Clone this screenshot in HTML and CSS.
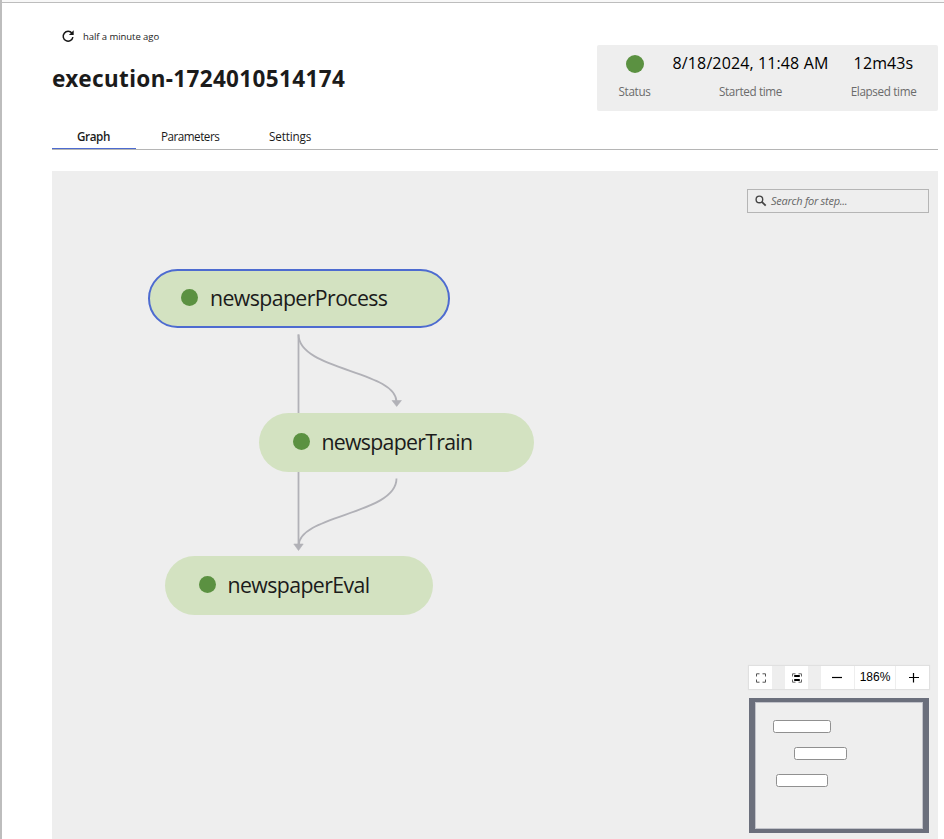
FILE: index.html
```html
<!DOCTYPE html>
<html lang="en">
<head>
<meta charset="utf-8">
<title>execution-1724010514174</title>
<link rel="stylesheet" href="styles.css">
</head>
<body>
<main class="page">
  <header class="header">
    <div class="heading">
      <div class="refresh">
        <svg class="refresh-icon" width="14" height="14" viewBox="0 0 14 14"><path d="M11 4.3A4.9 4.9 0 1 0 11.9 8.2" fill="none" stroke="#171717" stroke-width="1.5"/><path d="M12.7 1.2v4.9H7.9z" fill="#171717"/></svg>
        <span class="refresh-text">half a minute ago</span>
      </div>
      <h1 class="title">execution-1724010514174</h1>
    </div>
    <dl class="summary">
      <div class="stat stat-status"><dd class="value"><span class="status-dot"></span></dd><dt>Status</dt></div>
      <div class="stat stat-started"><dd class="value"><span class="value-text">8/18/2024, 11:48 AM</span></dd><dt>Started time</dt></div>
      <div class="stat stat-elapsed"><dd class="value"><span class="value-text">12m43s</span></dd><dt>Elapsed time</dt></div>
    </dl>
  </header>
  <nav class="tabs">
    <a class="tab tab-active">Graph</a>
    <a class="tab tab-parameters">Parameters</a>
    <a class="tab tab-settings">Settings</a>
  </nav>
  <section class="canvas">
    <svg class="edges" width="886" height="668" viewBox="52 171 886 668">
      <g fill="none" stroke="#b1b1b7" stroke-width="1.8">
        <path d="M298.5 334.5V545"/>
        <path d="M298.5 334.5C298.5 370.5 396.5 370.5 396.5 402"/>
        <path d="M396.5 478.5C396.5 514.5 298.5 514.5 298.5 546"/>
      </g>
      <path d="M392 400.5h9.4L396.7 406.5zM293.8 544h9.4L298.5 550.5z" fill="#b1b1b7" stroke="#b1b1b7" stroke-width=".6"/>
    </svg>
    <div class="node node-process"><span class="node-dot"></span><span class="node-label">newspaperProcess</span></div>
    <div class="node node-train"><span class="node-dot"></span><span class="node-label">newspaperTrain</span></div>
    <div class="node node-eval"><span class="node-dot"></span><span class="node-label">newspaperEval</span></div>
    <label class="search">
      <svg width="12" height="12" viewBox="0 0 12 12" fill="none" stroke="#444"><circle cx="4.4" cy="4.4" r="3.3" stroke-width="1.4"/><path d="M6.9 6.9L10.7 10.7" stroke-width="1.7"/></svg>
      <span class="search-text">Search for step...</span>
    </label>
    <div class="tools">
      <div class="controls">
        <button class="control" aria-label="Fit"><svg width="10" height="10" viewBox="0 0 10 10" fill="none" stroke="#555"><path d="M.5 3.5V.8H3.5M6.5 .8h3V3.5M9.5 6.5v2.7h-3M3.5 9.2H.5V6.5"/></svg></button>
        <button class="control" aria-label="Center"><svg width="10" height="10" viewBox="0 0 10 10" fill="none" stroke="#666"><path d="M.5 3.5V.8H3.5M6.5 .8h3V3.5M9.5 6.5v2.7h-3M3.5 9.2H.5V6.5"/><path d="M2.2 3h5.6M2.2 7h5.6" stroke="#000" stroke-width="2"/></svg></button>
        <div class="zoom">
          <button class="zoom-button zoom-out" aria-label="Zoom out"><svg width="10" height="10" viewBox="0 0 10 10"><path d="M0 4.5h10" stroke="#000" stroke-width="1.2"/></svg></button>
          <span class="zoom-value">186%</span>
          <button class="zoom-button zoom-in" aria-label="Zoom in"><svg width="10" height="10" viewBox="0 0 10 10"><path d="M0 4.5h10M4.5 0v9.5" stroke="#000" stroke-width="1.2"/></svg></button>
        </div>
      </div>
      <svg class="minimap" width="180" height="135" viewBox="0 0 180 135">
        <rect width="180" height="135" fill="#6b6f7c"/>
        <rect x="6.5" y="4.5" width="167" height="126" fill="#eee" stroke="#c2c3ca"/>
        <g fill="#fff" stroke="#909090">
          <rect x="24.5" y="22.5" width="57" height="12" rx="2"/>
          <rect x="45.5" y="49.5" width="52" height="12" rx="2"/>
          <rect x="27.5" y="76.5" width="51" height="12" rx="2"/>
        </g>
      </svg>
    </div>
  </section>
</main>
</body>
</html>
```
FILE: styles.css
```css
* { box-sizing: border-box; }

body {
  margin: 0;
  background: #fff;
  color: #1b1b1b;
  font-family: "Open Sans", "Noto Sans", sans-serif;
}

.page {
  display: flex;
  flex-direction: column;
  height: 839px;
  padding: 0 6px 0 50px;
  border-left: 2px solid #bdbdbd;
  background: linear-gradient(#f8f8f8 2px, #bdbdbd 2px, #bdbdbd 3px, #fff 3px);
  overflow: hidden;
}

.header {
  display: flex;
  justify-content: space-between;
  height: 124px;
  padding-top: 29px;
}

.refresh {
  display: flex;
  align-items: center;
  gap: 8px;
  height: 14px;
  padding-left: 9px;
}

.refresh-text { font-size: 9.5px; letter-spacing: -.06px; }

.title {
  margin: 19px 0 0;
  font-family: "Noto Sans", sans-serif;
  font-size: 22.5px;
  line-height: 34px;
  font-weight: 700;
  letter-spacing: .36px;
  white-space: nowrap;
}

.summary {
  display: flex;
  width: 341px;
  height: 66px;
  margin: 16px 0 0;
  border-radius: 2px;
  background: #eee;
  flex: none;
}

.stat {
  display: flex;
  flex-direction: column;
  align-items: center;
  white-space: nowrap;
}

.stat-status { width: 75px; }
.stat-started { width: 157px; }
.stat-elapsed { width: 109px; }

.value {
  display: flex;
  align-items: center;
  height: 38px;
  margin: 0;
  color: #000;
  font-size: 16px;
  letter-spacing: .12px;
}

.value-text { padding-bottom: 2px; }

.summary dt {
  color: #6b6b6b;
  font-size: 11.7px;
  line-height: 16px;
  letter-spacing: -.35px;
}

.status-dot {
  width: 18px;
  height: 18px;
  border-radius: 50%;
  background: #5b9141;
}

.tabs {
  display: flex;
  height: 26px;
  border-bottom: 1px solid #b5b5b5;
  font-size: 11.7px;
  line-height: 24px;
}

.tab { padding: 0 25px; letter-spacing: -.5px; }

.tab-parameters { width: 108px; }

.tab-settings { letter-spacing: -.15px; }

.tab-active {
  width: 84px;
  height: 25px;
  border-bottom: 1px solid #4d6bd0;
  font-weight: 600;
  letter-spacing: -.4px;
}

.canvas {
  position: relative;
  flex: 1;
  margin-top: 21px;
  background: #eee;
  overflow: hidden;
}

.edges { display: block; }

.node {
  position: absolute;
  display: flex;
  align-items: center;
  height: 59px;
  padding-left: 33.5px;
  border-radius: 30px;
  background: #d3e2c1;
}

.node-process {
  left: 96px;
  top: 98px;
  width: 302px;
  padding-left: 31px;
  border: 2px solid #4d6bd0;
}

.node-train { left: 207px; top: 242px; width: 275px; }
.node-train .node-label { letter-spacing: -.72px; }
.node-eval { left: 113px; top: 385.4px; width: 268px; }

.node-dot {
  width: 17px;
  height: 17px;
  margin: 0 12px 2px 0;
  border-radius: 50%;
  background: #5b9141;
}

.node-label {
  padding-bottom: 2px;
  font-size: 21.3px;
  line-height: 30px;
  letter-spacing: -.6px;
}

.search {
  position: absolute;
  top: 18px;
  right: 9px;
  display: flex;
  align-items: center;
  gap: 4px;
  width: 182px;
  height: 24px;
  padding-left: 7px;
  border: 1px solid #b5b5b5;
}

.search-text {
  padding-bottom: 2px;
  color: #666;
  font-size: 11px;
  font-style: italic;
  letter-spacing: -.27px;
}

.tools {
  position: absolute;
  right: 9px;
  bottom: 6px;
  display: flex;
  flex-direction: column;
  gap: 9px;
}

.controls {
  display: flex;
  gap: 13px;
  height: 23px;
  box-shadow: 0 0 1px 1px rgba(0, 0, 0, .06);
}

.control,
.zoom-button {
  display: flex;
  align-items: center;
  justify-content: center;
  padding: 0;
  border: 0;
  background: #fff;
}

.control { width: 23px; }

.zoom { display: flex; flex: 1; gap: 1px; }
.zoom-button { width: 33px; }
.zoom-out { padding-right: 2px; }
.zoom-in { padding-left: 2px; }

.zoom-value {
  flex: 1;
  background: #fff;
  color: #000;
  font: 12px/22px "Liberation Sans", sans-serif;
  text-align: center;
}

.minimap { display: block; }
```
